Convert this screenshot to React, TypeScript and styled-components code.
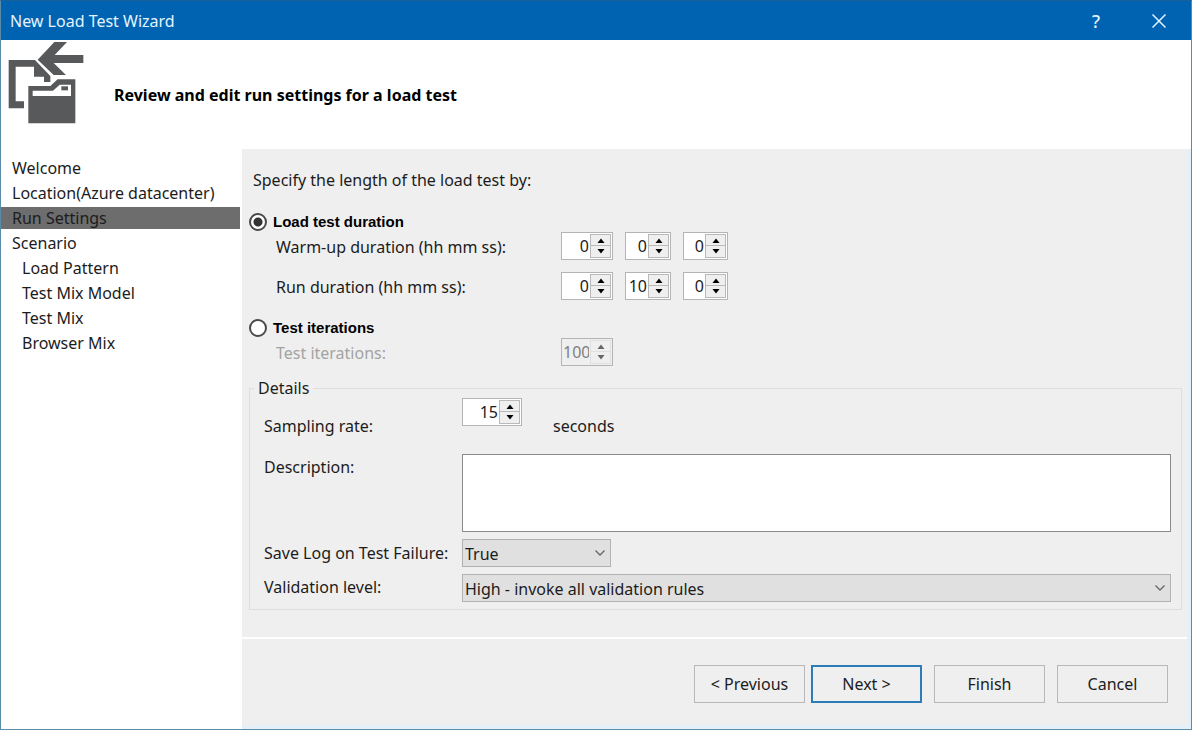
import React, { useState } from "react";
import styled, { createGlobalStyle, css } from "styled-components";

const GlobalStyle = createGlobalStyle`
  *, *::before, *::after { box-sizing: border-box; }
  body {
    margin: 0;
    background: #fff;
    color: #1c1c1c;
    font: 16px/26px "Noto Sans", "Open Sans", sans-serif;
  }
  button, input, select, textarea { font: inherit; color: inherit; }
`;

const Dialog = styled.div`
  display: flex;
  flex-direction: column;
  min-height: 100vh;
  border: 1px solid #5a8ba8;
  border-top-color: #1a5f96;
`;

const TitleBar = styled.header`
  display: flex;
  align-items: center;
  height: 39px;
  padding: 0 18px 0 9px;
  background: #0063b1;
  color: #e4f4ff;
`;

const Title = styled.h1`
  flex: 1;
  margin: 0;
  font-size: 16px;
  font-weight: 400;
`;

const TitleButton = styled.button`
  display: flex;
  align-items: center;
  justify-content: center;
  width: 28px;
  height: 32px;
  margin-left: 35px;
  padding: 0;
  border: 0;
  background: none;
  font-size: 18px;
  font-weight: 500;
`;

const Banner = styled.div`
  display: flex;
  align-items: center;
  gap: 30px;
  height: 109px;
  padding: 0 8px 0 7px;
`;

const BannerIcon = styled.svg`
  flex: none;
  align-self: flex-start;
  width: 76px;
  height: 82px;
  margin-top: 2px;
`;

const PageTitle = styled.h2`
  margin: 0;
  font-size: 16px;
  font-weight: 700;
  color: #000;
`;

const Body = styled.div`
  flex: 1;
  display: grid;
  grid-template-columns: 241px 1fr;
`;

const Steps = styled.nav`
  display: flex;
  flex-direction: column;
  gap: 3px;
  padding: 8px 2px 0 0;
`;

const Step = styled.a<{ $nested?: boolean; $current?: boolean }>`
  padding-left: ${(p) => (p.$nested ? 21 : 11)}px;
  line-height: 22px;
  color: inherit;
  text-decoration: none;
  background: ${(p) => (p.$current ? "#6d6d6d" : "transparent")};
`;

const Panel = styled.div`
  display: flex;
  flex-direction: column;
  border: solid #e6f0f8;
  border-width: 0 4px 4px 0;
  background: #efefef;
`;

const Settings = styled.main`
  flex: 1;
  padding: 18px 5px 16px 7px;
`;

const Intro = styled.p`
  margin: 0 4px 19px;
`;

const RadioLabel = styled.label`
  display: flex;
  align-items: center;
  gap: 6px;
  height: 20px;
  font: bold 15px/20px "Liberation Sans", Arial, sans-serif;
  color: #000;
`;

const Radio = styled.input`
  appearance: none;
  width: 18px;
  height: 18px;
  margin: 0;
  border: 2px solid #4a4a4a;
  border-radius: 50%;
  background: #fff;
  &:checked {
    background: radial-gradient(circle, #333 0 4px, #fff 5px);
  }
`;

const DurationRow = styled.div`
  display: grid;
  grid-template-columns: 273px 52px 46px 45px;
  column-gap: 12px;
  align-items: end;
  height: 28px;
  margin-left: 27px;
  & + & { margin-top: 12px; }
  & + label { margin-top: 18px; }
`;

const Caption = styled.label<{ $disabled?: boolean }>`
  white-space: nowrap;
  color: ${(p) => (p.$disabled ? "#a3a3a3" : "inherit")};
`;

const Stepper = styled.div<{ $disabled?: boolean }>`
  display: flex;
  height: 28px;
  padding: 1px;
  border: 1px solid #b4b4b4;
  background: ${(p) => (p.$disabled ? "#efefef" : "#fff")};
  color: ${(p) => (p.$disabled ? "#808080" : "#1c1c1c")};
`;

const NumberBox = styled.input`
  flex: 1;
  min-width: 0;
  width: 0;
  padding: 0 1px 0 0;
  border: 0;
  background: none;
  text-align: right;
  line-height: 24px;
  appearance: textfield;
  &::-webkit-inner-spin-button { appearance: none; margin: 0; }
`;

const Arrows = styled.div`
  display: grid;
  grid-template-rows: 1fr 1fr;
  width: 21px;
`;

const ArrowButton = styled.button`
  display: flex;
  align-items: center;
  justify-content: center;
  min-height: 0;
  padding: 0;
  border: 1px solid #b9b9b9;
  background: #efefef;
  color: #000;
  & + & { border-top: 0; }
  &:disabled { border-color: #e0e0e0; color: #666; }
`;

const Details = styled.fieldset`
  min-width: 0;
  margin: 12px 0 0;
  padding: 0;
  border: 1px solid #dedede;
`;

const Legend = styled.legend`
  margin-left: 4px;
  padding: 0 4px;
  line-height: 20px;
`;

const Fields = styled.div`
  display: grid;
  grid-template-columns: 198px 1fr;
  padding: 0 10px 7px 14px;
  row-gap: 7px;
`;

const SamplingControl = styled.div`
  display: grid;
  grid-template-columns: 60px auto;
  justify-content: start;
  column-gap: 31px;
  height: 41px;
  margin-bottom: 8px;
`;

const BottomCaption = styled(Caption)`
  align-self: end;
`;

const SamplingCaption = styled(BottomCaption)`
  margin-bottom: 8px;
`;

const Description = styled.textarea`
  display: block;
  width: 100%;
  height: 78px;
  border: 1px solid #8a8a8a;
  background: #fff;
  resize: none;
`;

const SelectCaption = styled(Caption)`
  line-height: 28px;
`;

const SelectBox = styled.div<{ $short?: boolean }>`
  display: grid;
  align-items: center;
  width: ${(p) => (p.$short ? "149px" : "100%")};
  & > * { grid-area: 1 / 1; }
  & > svg { justify-self: end; margin-right: 5px; pointer-events: none; }
`;

const Select = styled.select`
  appearance: none;
  width: 100%;
  height: 28px;
  padding: 1px 20px 0 2px;
  border: 1px solid #b1b1b1;
  border-radius: 0;
  background: #e0e0e0;
`;

const Actions = styled.footer`
  display: flex;
  justify-content: flex-end;
  gap: 12px;
  padding: 26px 19px 22px;
  border-top: 2px solid #fff;
`;

const ActionButton = styled.button<{ $primary?: boolean }>`
  width: 111px;
  height: 38px;
  padding: 0;
  border: 1px solid #b8b8b8;
  background: #efefef;
  ${(p) =>
    p.$primary &&
    css`
      border: 2px solid #2d7cb8;
    `}
`;

const PreviousButton = styled(ActionButton)`
  margin-right: -6px;
`;

function Chevron() {
  return (
    <svg width="12" height="8" viewBox="0 0 12 8" fill="none" stroke="#666" strokeWidth="1.3" aria-hidden="true">
      <path d="M1.5 1.5 6 6l4.500-4.500" />
    </svg>
  );
}

function Triangle({ down }: { down?: boolean }) {
  return (
    <svg width="8" height="5" viewBox="0 0 8 5" fill="currentColor" aria-hidden="true">
      <path d={down ? "M.5 0h7L4 4.500z" : "M4 .5 7.500 5h-7z"} />
    </svg>
  );
}

type SpinnerProps = { id: string; label: string; initial: number; disabled?: boolean };

function Spinner({ id, label, initial, disabled }: SpinnerProps) {
  const [value, setValue] = useState(initial);
  return (
    <Stepper $disabled={disabled}>
      <NumberBox
        id={id}
        type="number"
        min={0}
        aria-label={label}
        disabled={disabled}
        value={value}
        onChange={(e) => setValue(Number(e.target.value))}
      />
      <Arrows>
        <ArrowButton type="button" aria-label={`Increase ${label}`} disabled={disabled} onClick={() => setValue(value + 1)}>
          <Triangle />
        </ArrowButton>
        <ArrowButton type="button" aria-label={`Decrease ${label}`} disabled={disabled} onClick={() => setValue(Math.max(0, value - 1))}>
          <Triangle down />
        </ArrowButton>
      </Arrows>
    </Stepper>
  );
}

const steps = [
  { name: "Welcome" },
  { name: "Location(Azure datacenter)" },
  { name: "Run Settings", current: true },
  { name: "Scenario" },
  { name: "Load Pattern", nested: true },
  { name: "Test Mix Model", nested: true },
  { name: "Test Mix", nested: true },
  { name: "Browser Mix", nested: true },
];

export default function App() {
  const [mode, setMode] = useState("duration");
  const byDuration = mode === "duration";

  return (
    <>
      <GlobalStyle />
      <Dialog>
        <TitleBar>
          <Title>New Load Test Wizard</Title>
          <TitleButton type="button" aria-label="Help">?</TitleButton>
          <TitleButton type="button" aria-label="Close">
            <svg width="14" height="14" viewBox="0 0 14 14" stroke="currentColor" strokeWidth="1.5" aria-hidden="true">
              <path d="M.5.5l13 13M13.500.5l-13 13" />
            </svg>
          </TitleButton>
        </TitleBar>
        <Banner>
          <BannerIcon viewBox="24 126 226 246" fill="#58595b" fillRule="evenodd" aria-hidden="true">
            <path d="M112 179 162 126H200L163 165H249V189H160L197 225H160Z" />
            <path d="M25 180H104L150 228V246H131V230H101V200H46V304H71V325H25Z" />
            <path d="M84 258H150L172 238H225V370H84ZM97 272V288H212V254H178L158 272Z" />
            <path d="M183 259H203V271H183Z" />
          </BannerIcon>
          <PageTitle>Review and edit run settings for a load test</PageTitle>
        </Banner>
        <Body>
          <Steps aria-label="Wizard steps">
            {steps.map((s) => (
              <Step key={s.name} href="#" $nested={s.nested} $current={s.current} aria-current={s.current ? "step" : undefined}>
                {s.name}
              </Step>
            ))}
          </Steps>
          <Panel>
            <Settings>
              <Intro>Specify the length of the load test by:</Intro>

              <RadioLabel>
                <Radio type="radio" name="mode" checked={byDuration} onChange={() => setMode("duration")} />
                Load test duration
              </RadioLabel>
              <DurationRow>
                <Caption htmlFor="warm-h" $disabled={!byDuration}>Warm-up duration (hh mm ss):</Caption>
                <Spinner id="warm-h" label="Warm-up hours" initial={0} disabled={!byDuration} />
                <Spinner id="warm-m" label="Warm-up minutes" initial={0} disabled={!byDuration} />
                <Spinner id="warm-s" label="Warm-up seconds" initial={0} disabled={!byDuration} />
              </DurationRow>
              <DurationRow>
                <Caption htmlFor="run-h" $disabled={!byDuration}>Run duration (hh mm ss):</Caption>
                <Spinner id="run-h" label="Run hours" initial={0} disabled={!byDuration} />
                <Spinner id="run-m" label="Run minutes" initial={10} disabled={!byDuration} />
                <Spinner id="run-s" label="Run seconds" initial={0} disabled={!byDuration} />
              </DurationRow>

              <RadioLabel>
                <Radio type="radio" name="mode" checked={!byDuration} onChange={() => setMode("iterations")} />
                Test iterations
              </RadioLabel>
              <DurationRow>
                <Caption htmlFor="iterations" $disabled={byDuration}>Test iterations:</Caption>
                <Spinner id="iterations" label="Test iterations" initial={100} disabled={byDuration} />
              </DurationRow>

              <Details>
                <Legend>Details</Legend>
                <Fields>
                  <SamplingCaption htmlFor="sampling">Sampling rate:</SamplingCaption>
                  <SamplingControl>
                    <Spinner id="sampling" label="Sampling rate" initial={15} />
                    <BottomCaption as="span">seconds</BottomCaption>
                  </SamplingControl>
                  <Caption htmlFor="description">Description:</Caption>
                  <Description id="description" />
                  <SelectCaption htmlFor="save-log">Save Log on Test Failure:</SelectCaption>
                  <SelectBox $short>
                    <Select id="save-log" defaultValue="True">
                      <option>True</option>
                      <option>False</option>
                    </Select>
                    <Chevron />
                  </SelectBox>
                  <Caption htmlFor="validation">Validation level:</Caption>
                  <SelectBox>
                    <Select id="validation">
                      <option>High - invoke all validation rules</option>
                    </Select>
                    <Chevron />
                  </SelectBox>
                </Fields>
              </Details>
            </Settings>
            <Actions>
              <PreviousButton type="button">&lt; Previous</PreviousButton>
              <ActionButton type="button" $primary>Next &gt;</ActionButton>
              <ActionButton type="button">Finish</ActionButton>
              <ActionButton type="button">Cancel</ActionButton>
            </Actions>
          </Panel>
        </Body>
      </Dialog>
    </>
  );
}
